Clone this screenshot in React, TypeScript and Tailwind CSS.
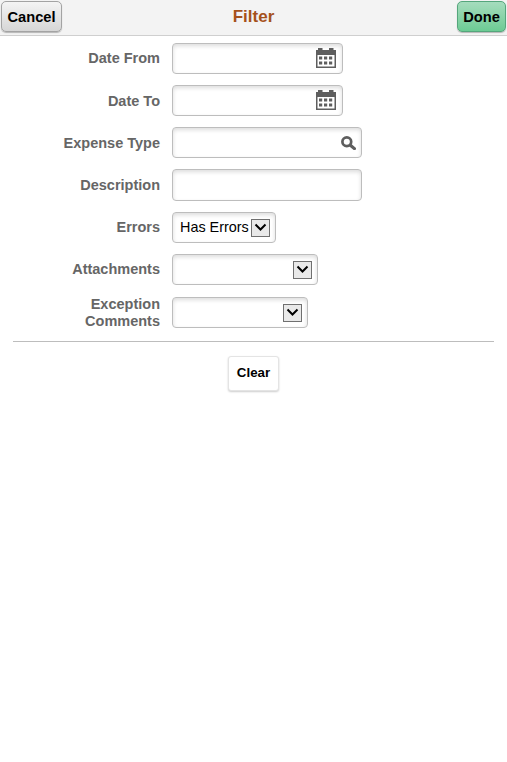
import React from "react";

const CalendarIcon = () => (
  <svg width="20" height="20" viewBox="0 0 20 20" className="mb-[2px] block">
    <rect x="0.75" y="2.75" width="18.5" height="16.5" fill="#fff" stroke="#5e5e5e" strokeWidth="1.5" />
    <rect x="0" y="2" width="20" height="5" fill="#5e5e5e" />
    <rect x="2" y="0" width="4.5" height="4" fill="#5e5e5e" />
    <rect x="13" y="0" width="4.5" height="4" fill="#5e5e5e" />
    <rect x="3" y="8.5" width="3.2" height="3" fill="#5e5e5e" />
    <rect x="8" y="8.5" width="3.2" height="3" fill="#5e5e5e" />
    <rect x="13" y="8.5" width="3.2" height="3" fill="#5e5e5e" />
    <rect x="3" y="13.5" width="3.2" height="3" fill="#5e5e5e" />
    <rect x="8" y="13.5" width="3.2" height="3" fill="#5e5e5e" />
    <rect x="13" y="13.5" width="3.2" height="3" fill="#5e5e5e" />
  </svg>
);

const SearchIcon = () => (
  <svg width="15" height="14" viewBox="0 0 15 14" className="block">
    <circle cx="5.8" cy="5.8" r="4.4" fill="none" stroke="#5e5e5e" strokeWidth="2.7" />
    <path d="M9.4 9.2 L13.4 12.6" stroke="#5e5e5e" strokeWidth="3.2" strokeLinecap="round" />
  </svg>
);

const SelectArrow = () => (
  <span className="flex h-[18px] w-[19px] items-center justify-center border border-[#707070] bg-[#e9e9e9]">
    <svg width="13" height="9" viewBox="0 0 13 9" className="block">
      <path d="M1.5 1.5 L6.5 6.5 L11.5 1.5" fill="none" stroke="#000" strokeWidth="2" />
    </svg>
  </span>
);

const Field = ({ width, height = "h-[31px]", className = "", children }: { width: string; height?: string; className?: string; children?: React.ReactNode }) => (
  <div className={`flex ${height} ${width} items-center rounded-[4px] border border-[#bdbdbd] bg-white shadow-[inset_0_2px_4px_rgba(0,0,0,0.14)] ${className}`}>
    {children}
  </div>
);

const Row = ({ label, children, className = "", labelClass = "" }: { label: React.ReactNode; children: React.ReactNode; className?: string; labelClass?: string }) => (
  <div className={`flex items-center ${className}`}>
    <div className={`w-[160px] pl-[40px] text-right text-[14.5px] leading-[17px] font-bold text-[#666666] ${labelClass}`}>{label}</div>
    <div className="ml-[12px]">{children}</div>
  </div>
);

export default function App() {
  return (
    <div className="min-h-[762px] bg-white font-['Liberation_Sans',Arial,sans-serif]">
      <div className="flex h-[36px] items-start border-b border-[#cfcfcf] bg-[#f3f3f3] px-[1px] pt-[1px]">
        <div className="flex-1">
          <button className="h-[31px] w-[61px] rounded-[5px] border border-[#a3a3a3] bg-gradient-to-b from-[#f4f4f4] to-[#d6d6d6] text-[14.67px] font-bold text-black shadow-[0_1px_1px_rgba(0,0,0,0.25)]">
            Cancel
          </button>
        </div>
        <div className="pt-[7px] text-[17px] leading-[18px] font-bold text-[#a5511b]">Filter</div>
        <div className="flex flex-1 justify-end">
          <button className="h-[31px] w-[49px] rounded-[5px] border border-[#55a67c] bg-gradient-to-b from-[#a5dcbd] to-[#6ccb94] text-[14.67px] font-bold text-black shadow-[0_1px_1px_rgba(0,0,0,0.25)]">
            Done
          </button>
        </div>
      </div>

      <div className="flex flex-col pt-[7px]">
        <Row label="Date From" className="mb-[11px]">
          <Field width="w-[171px]" className="justify-end pr-[6px]">
            <CalendarIcon />
          </Field>
        </Row>
        <Row label="Date To" className="mb-[11px]" labelClass="pt-[1px]">
          <Field width="w-[171px]" className="justify-end pr-[6px]">
            <CalendarIcon />
          </Field>
        </Row>
        <Row label="Expense Type" className="mb-[11px]" labelClass="pt-[1px]">
          <Field width="w-[190px]" className="justify-end pr-[5px]">
            <SearchIcon />
          </Field>
        </Row>
        <Row label="Description" className="mb-[11px]">
          <Field width="w-[190px]" height="h-[32px]" />
        </Row>
        <Row label="Errors" className="mb-[11px]">
          <Field width="w-[104px]" className="pr-[5px] pl-[7px]">
            <span className="flex-1 text-[14.4px] text-black">Has Errors</span>
            <SelectArrow />
          </Field>
        </Row>
        <Row label="Attachments" className="mb-[11px]">
          <Field width="w-[146px]" className="justify-end pr-[5px]">
            <SelectArrow />
          </Field>
        </Row>
        <Row label={<>Exception<br />Comments</>}>
          <Field width="w-[136px]" className="mb-[1px] justify-end pr-[5px]">
            <SelectArrow />
          </Field>
        </Row>
      </div>

      <div className="mx-[13px] mt-[11px] border-t border-[#bdbdbd]" />

      <div className="mt-[14px] flex justify-center">
        <button className="h-[35px] w-[51px] rounded-[3px] border border-[#e4e4e4] bg-white pb-[2px] text-[13.3px] font-bold text-black shadow-[0_1px_2px_rgba(0,0,0,0.2)]">
          Clear
        </button>
      </div>
    </div>
  );
}
